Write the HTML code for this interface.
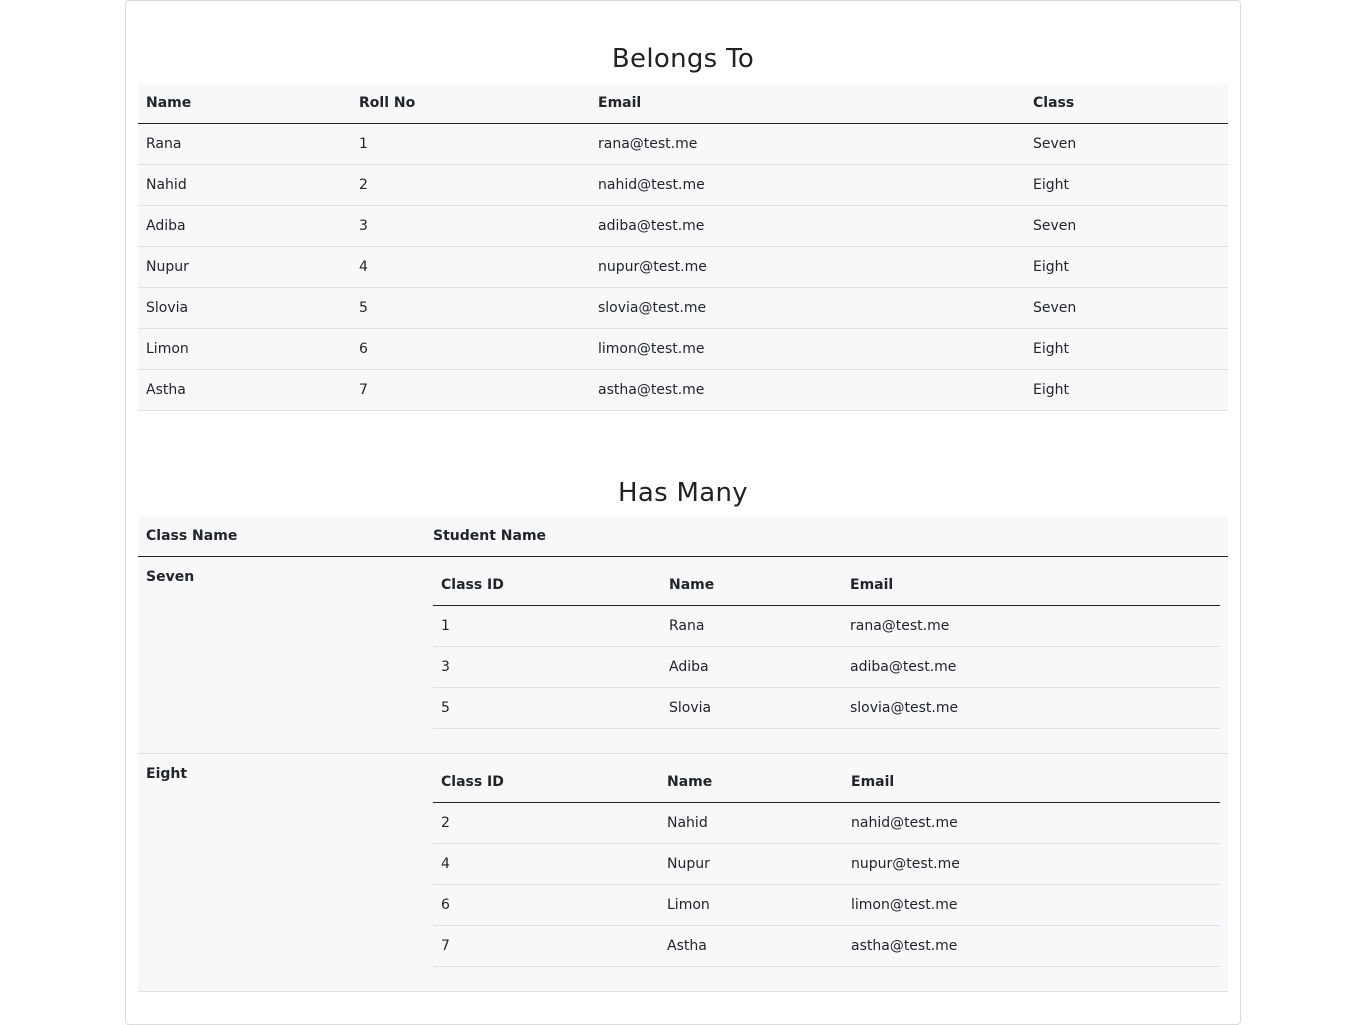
<!DOCTYPE html>
<html><head><meta charset="utf-8"><style>
*{box-sizing:border-box;margin:0;padding:0}
body{width:1366px;height:1025px;background:#fff;font-family:"DejaVu Sans","Liberation Sans",sans-serif;color:#212529;font-size:14px;overflow:hidden;position:relative}
.card{position:absolute;left:125px;top:0;width:1116px;height:1025px;border:1px solid #dcdcdc;border-radius:4px}
h2{position:absolute;left:0;width:100%;text-align:center;font-weight:400;font-size:26px;color:#222;letter-spacing:0.3px}
table{border-collapse:collapse;table-layout:fixed;background:#f7f8fa;position:absolute}
td,th{padding:0 8px;text-align:left;vertical-align:middle;border-bottom:1px solid #dee2e6;height:41px}
th{font-weight:bold;height:40px;border-bottom:1px solid #222}
td.top{vertical-align:top;padding-top:12px;font-weight:bold}
td.wrap{vertical-align:top;padding-top:9px}
.inner{position:static;width:787px}
</style></head><body>
<div class="card"></div>
<h2 style="top:44px">Belongs To</h2>
<table style="left:138px;top:83px;width:1090px">
<colgroup><col style="width:213px"><col style="width:239px"><col style="width:435px"><col style="width:203px"></colgroup>
<tr><th>Name</th><th>Roll No</th><th>Email</th><th>Class</th></tr>
<tr><td>Rana</td><td>1</td><td>rana@test.me</td><td>Seven</td></tr>
<tr><td>Nahid</td><td>2</td><td>nahid@test.me</td><td>Eight</td></tr>
<tr><td>Adiba</td><td>3</td><td>adiba@test.me</td><td>Seven</td></tr>
<tr><td>Nupur</td><td>4</td><td>nupur@test.me</td><td>Eight</td></tr>
<tr><td>Slovia</td><td>5</td><td>slovia@test.me</td><td>Seven</td></tr>
<tr><td>Limon</td><td>6</td><td>limon@test.me</td><td>Eight</td></tr>
<tr><td>Astha</td><td>7</td><td>astha@test.me</td><td>Eight</td></tr>
</table>
<h2 style="top:478px">Has Many</h2>
<table style="left:138px;top:516px;width:1090px">
<colgroup><col style="width:287px"><col style="width:803px"></colgroup>
<tr><th>Class Name</th><th>Student Name</th></tr>
<tr><td class="top" style="height:197px">Seven</td><td class="wrap" style="height:197px">
<table class="inner"><colgroup><col style="width:228px"><col style="width:181px"><col style="width:378px"></colgroup>
<tr><th>Class ID</th><th>Name</th><th>Email</th></tr>
<tr><td>1</td><td>Rana</td><td>rana@test.me</td></tr>
<tr><td>3</td><td>Adiba</td><td>adiba@test.me</td></tr>
<tr><td>5</td><td>Slovia</td><td>slovia@test.me</td></tr>
</table></td></tr>
<tr><td class="top" style="height:238px">Eight</td><td class="wrap" style="height:238px">
<table class="inner"><colgroup><col style="width:226px"><col style="width:184px"><col style="width:377px"></colgroup>
<tr><th>Class ID</th><th>Name</th><th>Email</th></tr>
<tr><td>2</td><td>Nahid</td><td>nahid@test.me</td></tr>
<tr><td>4</td><td>Nupur</td><td>nupur@test.me</td></tr>
<tr><td>6</td><td>Limon</td><td>limon@test.me</td></tr>
<tr><td>7</td><td>Astha</td><td>astha@test.me</td></tr>
</table></td></tr>
</table>
</body></html>
